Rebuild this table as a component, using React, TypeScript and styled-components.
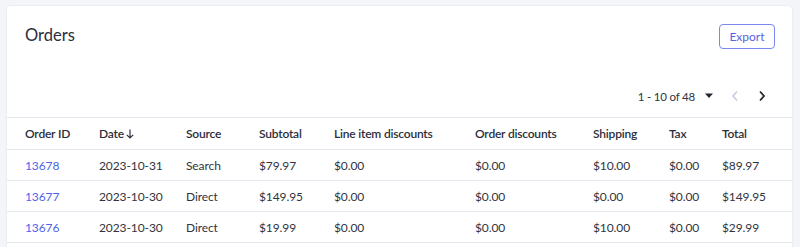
import { createGlobalStyle } from "styled-components";
import styled from "styled-components";

const GlobalStyle = createGlobalStyle`
  body {
    margin: 0;
    background: #f4f5f9;
    font-family: Lato, "Liberation Sans", sans-serif;
    color: #313440;
  }
`;

const COLS = "74px 87px 73px 75px 141px 118px 76px 53px 1fr";

type Order = {
    id: string;
    date: string;
    source: string;
    subtotal: string;
    lineDiscount: string;
    orderDiscount: string;
    shipping: string;
    tax: string;
    total: string;
};

const orders: Order[] = [
    { id: "13678", date: "2023-10-31", source: "Search", subtotal: "$79.97", lineDiscount: "$0.00", orderDiscount: "$0.00", shipping: "$10.00", tax: "$0.00", total: "$89.97" },
    { id: "13677", date: "2023-10-30", source: "Direct", subtotal: "$149.95", lineDiscount: "$0.00", orderDiscount: "$0.00", shipping: "$0.00", tax: "$0.00", total: "$149.95" },
    { id: "13676", date: "2023-10-30", source: "Direct", subtotal: "$19.99", lineDiscount: "$0.00", orderDiscount: "$0.00", shipping: "$10.00", tax: "$0.00", total: "$29.99" },
];

const App = () => {
    return (
        <>
            <GlobalStyle />
            <Page>
                <Card>
                    <CardHeader>
                        <Title>Orders</Title>
                        <ExportButton>Export</ExportButton>
                    </CardHeader>
                    <Pager>
                        <PageLabel>1 - 10 of 48</PageLabel>
                        <IconButton aria-label="page size" $w={24}>
                            <svg width="10" height="6" viewBox="0 0 10 6">
                                <path d="M1 0.5h8L5 5z" fill="#23252f" />
                            </svg>
                        </IconButton>
                        <IconButton aria-label="previous" $w={28} disabled>
                            <svg width="8" height="12" viewBox="0 0 8 12">
                                <path d="M6 1.5L2 6l4 4.5" fill="none" stroke="#c9cce0" strokeWidth="1.6" />
                            </svg>
                        </IconButton>
                        <IconButton aria-label="next" $w={26}>
                            <svg width="8" height="12" viewBox="0 0 8 12">
                                <path d="M2 1.5L6 6l-4 4.5" fill="none" stroke="#23252f" strokeWidth="1.8" />
                            </svg>
                        </IconButton>
                    </Pager>
                    <Table>
                        <HeadRow>
                            <span>Order ID</span>
                            <span>
                                Date
                                <SortArrow width="8" height="10" viewBox="0 0 8 10">
                                    <path d="M4 0.5v8.5M0.8 5.8L4 9l3.2-3.2" fill="none" stroke="#313440" strokeWidth="1.2" />
                                </SortArrow>
                            </span>
                            <span>Source</span>
                            <span>Subtotal</span>
                            <span>Line item discounts</span>
                            <span>Order discounts</span>
                            <span>Shipping</span>
                            <span>Tax</span>
                            <span>Total</span>
                        </HeadRow>
                        {orders.map((o) => (
                            <Row key={o.id}>
                                <OrderLink href="#">{o.id}</OrderLink>
                                <span>{o.date}</span>
                                <span>{o.source}</span>
                                <span>{o.subtotal}</span>
                                <span>{o.lineDiscount}</span>
                                <span>{o.orderDiscount}</span>
                                <span>{o.shipping}</span>
                                <span>{o.tax}</span>
                                <span>{o.total}</span>
                            </Row>
                        ))}
                    </Table>
                </Card>
            </Page>
        </>
    );
};

export default App;

const Page = styled.div`
    height: 247px;
    overflow: hidden;
    padding: 6px 8px 0 7px;
    box-sizing: border-box;
`;

const Card = styled.div`
    min-height: 280px;
    background: #fff;
    border-radius: 4px;
    box-shadow: 0 0 0 1px #eceef4, 0 1px 3px rgba(40, 44, 70, 0.06);
`;

const CardHeader = styled.div`
    display: flex;
    align-items: flex-start;
    justify-content: space-between;
    padding: 18px 17px 0 18px;
    height: 25px;
`;

const Title = styled.h1`
    margin: 0;
    font-size: 16.5px;
    font-weight: 400;
    line-height: 22px;
    color: #2b2e3a;
`;

const ExportButton = styled.button`
    box-sizing: border-box;
    height: 25px;
    width: 56px;
    border: 1px solid #7a88ee;
    border-radius: 4px;
    background: #fff;
    color: #5465e6;
    font-family: inherit;
    font-size: 12px;
    padding: 0;
    cursor: pointer;
`;

const Pager = styled.div`
    display: flex;
    align-items: center;
    justify-content: flex-end;
    padding: 37px 17px 11px 0;
    height: 20px;
`;

const PageLabel = styled.span`
    font-size: 11.5px;
    letter-spacing: -0.2px;
    color: #313440;
    margin-right: 2px;
`;

const IconButton = styled.button<{ $w: number }>`
    display: flex;
    align-items: center;
    justify-content: center;
    width: ${({ $w }) => $w}px;
    height: 20px;
    border: 0;
    padding: 0;
    background: none;
    cursor: pointer;
`;

const Table = styled.div`
    border-top: 1px solid #e6e7ee;
`;

const HeadRow = styled.div`
    display: grid;
    grid-template-columns: ${COLS};
    align-items: center;
    height: 31px;
    padding-left: 18px;
    border-bottom: 1px solid #e3e4ec;
    font-size: 12px;
    letter-spacing: -0.2px;
    font-weight: 600;
    color: #2b2e3a;

    & span {
        display: flex;
        align-items: center;
    }
`;

const SortArrow = styled.svg`
    margin-left: 2px;
`;

const Row = styled.div`
    display: grid;
    grid-template-columns: ${COLS};
    align-items: center;
    height: 30px;
    padding-left: 18px;
    border-bottom: 1px solid #e6e7ee;
    font-size: 12px;
    letter-spacing: -0.1px;
    color: #313440;
`;

const OrderLink = styled.a`
    color: #4f63ea;
    text-decoration: none;
`;
